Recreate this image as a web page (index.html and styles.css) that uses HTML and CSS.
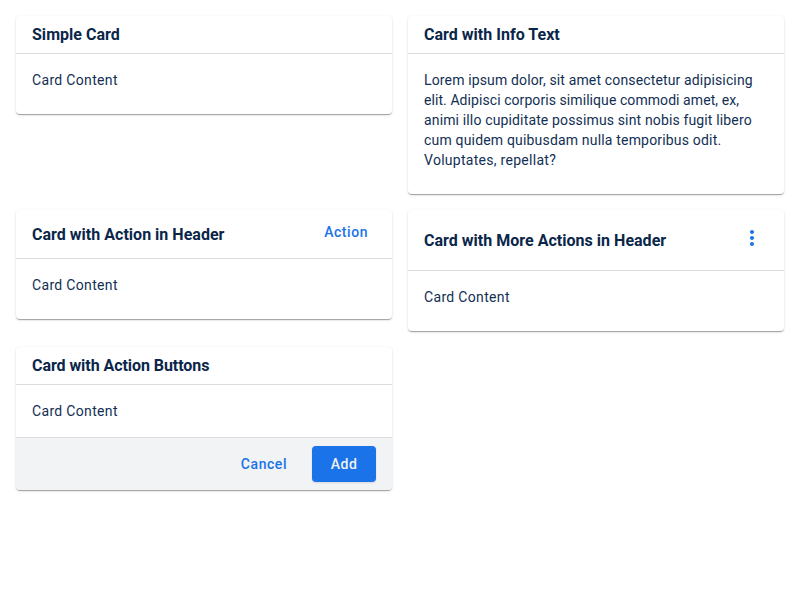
FILE: index.html
```html
<!DOCTYPE html>
<html lang="en">
<head>
<meta charset="utf-8">
<title>Cards</title>
<link rel="stylesheet" href="styles.css">
</head>
<body>
<main class="grid">
  <section class="card">
    <header class="card-header"><h3>Simple Card</h3></header>
    <div class="card-content">Card Content</div>
  </section>
  <section class="card">
    <header class="card-header"><h3>Card with Info Text</h3></header>
    <div class="card-content info"><span class="snug">Lorem ipsum dolor, sit amet consectetur adipisicing</span> <span class="tight">elit. Adipisci corporis similique commodi amet, ex,</span><br><span class="snug">animi illo cupiditate possimus sint nobis fugit libero</span> <span class="normal">cum quidem quibusdam nulla temporibus odit.</span> <span class="loose">Voluptates, repellat?</span></div>
  </section>
  <section class="card">
    <header class="card-header with-action"><h3>Card with Action in Header</h3><button class="btn btn-header">Action</button></header>
    <div class="card-content">Card Content</div>
  </section>
  <section class="card">
    <header class="card-header with-menu"><h3>Card with More Actions in Header</h3>
      <button class="icon-btn" aria-label="More"><svg width="24" height="24" viewBox="0 0 24 24" fill="currentColor"><path d="M12 8c1.1 0 2-.9 2-2s-.9-2-2-2-2 .9-2 2 .9 2 2 2zm0 2c-1.1 0-2 .9-2 2s.9 2 2 2 2-.9 2-2-.9-2-2-2zm0 6c-1.1 0-2 .9-2 2s.9 2 2 2 2-.9 2-2-.9-2-2-2z"/></svg></button>
    </header>
    <div class="card-content">Card Content</div>
  </section>
  <section class="card">
    <header class="card-header"><h3 class="compact">Card with Action Buttons</h3></header>
    <div class="card-content short">Card Content</div>
    <footer class="card-actions"><button class="btn">Cancel</button><button class="btn btn-primary">Add</button></footer>
  </section>
</main>
</body>
</html>
```
FILE: styles.css
```css
* { box-sizing: border-box; }
body {
  margin: 0;
  background: #fff;
  color: #0a2649;
  font: 400 14px/20px Roboto, sans-serif;
  letter-spacing: 0.33px;
}
.grid {
  display: grid;
  grid-template-columns: 1fr 1fr;
  gap: 16px;
  padding: 16px;
  align-items: start;
}
.card {
  border-radius: 4px;
  background: #fff;
  overflow: hidden;
  box-shadow: 0 2px 1px -1px rgba(0,0,0,.2), 0 1px 1px 0 rgba(0,0,0,.14), 0 1px 3px 0 rgba(0,0,0,.12);
}
.card-header {
  display: flex;
  align-items: center;
  justify-content: space-between;
  height: 38px;
  padding: 0 16px;
  border-bottom: 1px solid #dadce0;
}
.with-action { height: 49px; }
.with-menu { height: 61px; }
.with-action h3, .with-menu h3 { margin-top: 2px; }
h3 {
  margin: 0;
  font-size: 16px;
  line-height: 20px;
  font-weight: 700;
  letter-spacing: 0.02px;
}
.compact { letter-spacing: -0.06px; }
.card-content { padding: 16px 16px 24px; color: #122f54; }
.short { padding-bottom: 16px; }
.snug { letter-spacing: 0.145px; }
.tight { letter-spacing: 0.07px; }
.normal { letter-spacing: 0.18px; }
.loose { letter-spacing: 0.28px; }
.btn {
  height: 36px;
  padding: 0 16px;
  border: 0;
  border-radius: 4px;
  background: transparent;
  color: #1a73e8;
  font: 500 14px/36px Roboto, sans-serif;
  letter-spacing: 0.55px;
}
.btn-header { margin: 0 -8px 4px 0; }
.icon-btn {
  width: 48px;
  height: 48px;
  padding: 12px;
  margin: 0 -8px 4px 0;
  border: 0;
  background: transparent;
  color: #1a73e8;
}
.icon-btn svg { display: block; }
.card-actions {
  display: flex;
  justify-content: flex-end;
  gap: 9px;
  padding: 8px 16px;
  border-top: 1px solid #dadce0;
  background: #f1f3f4;
}
.btn-primary {
  width: 64px;
  background: #1a73e8;
  color: #f1f3f4;
  box-shadow: 0 1px 2px rgba(0,0,0,.12);
}
```
